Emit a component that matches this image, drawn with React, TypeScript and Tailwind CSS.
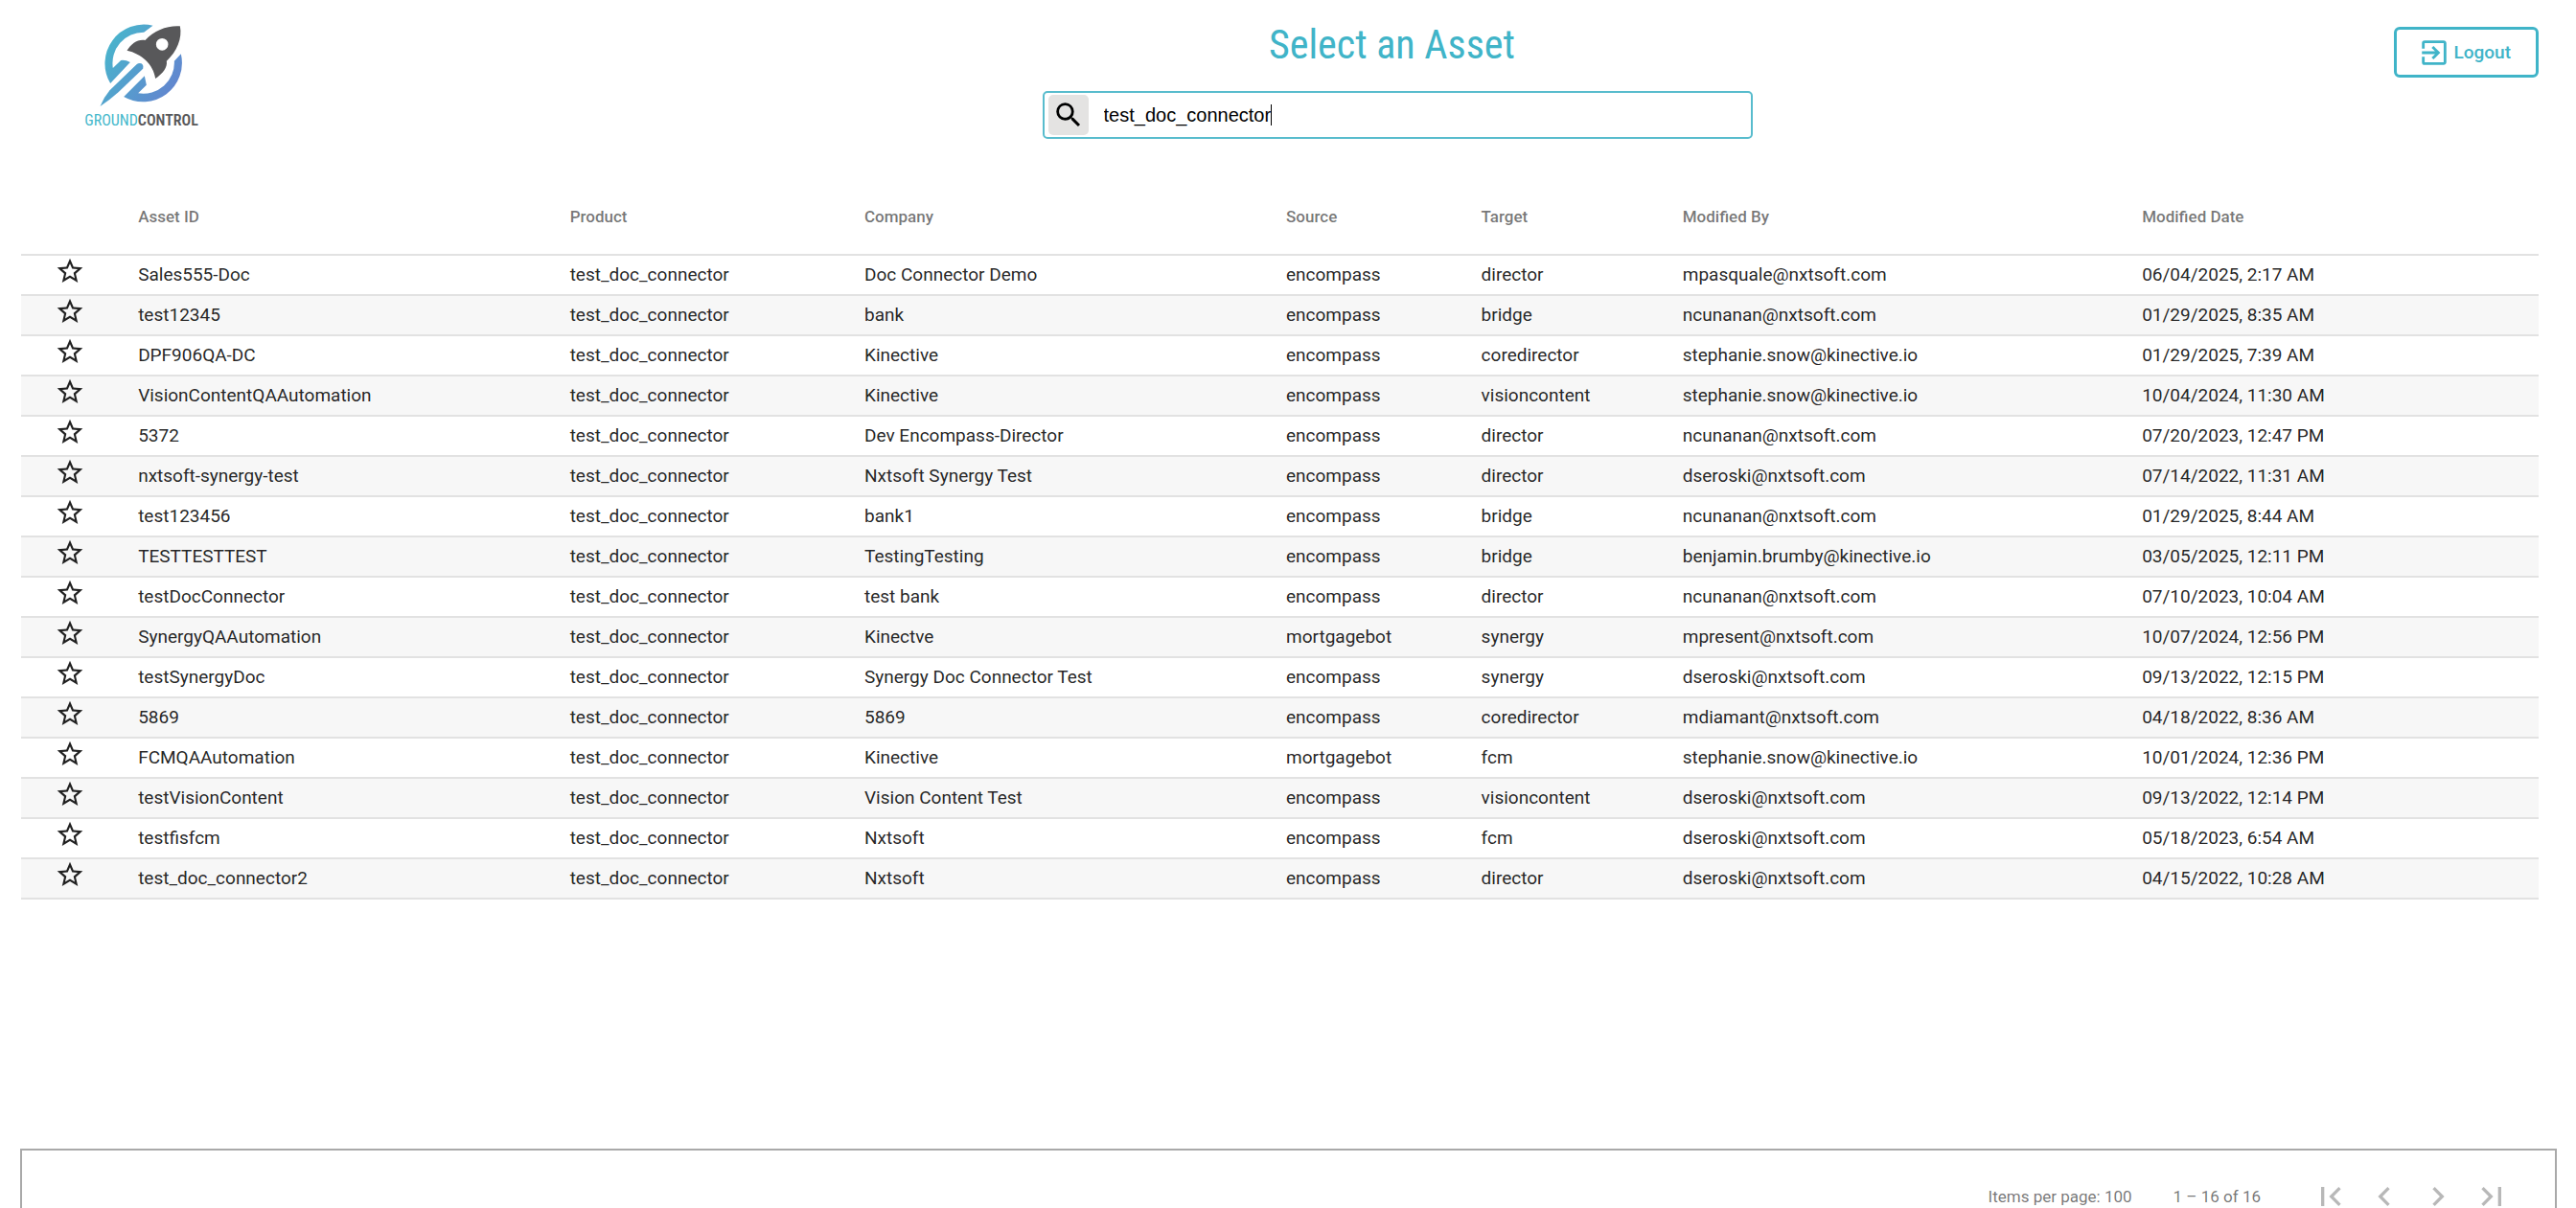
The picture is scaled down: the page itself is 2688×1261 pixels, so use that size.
import {
  MdChevronLeft,
  MdChevronRight,
  MdExitToApp,
  MdFirstPage,
  MdLastPage,
  MdSearch,
  MdStarBorder,
} from "react-icons/md";

const columns = [
  { label: "Asset ID", width: "w-[17.15%]" },
  { label: "Product", width: "w-[11.7%]" },
  { label: "Company", width: "w-[16.75%]" },
  { label: "Source", width: "w-[7.75%]" },
  { label: "Target", width: "w-[8%]" },
  { label: "Modified By", width: "w-[18.25%]" },
  { label: "Modified Date", width: "" },
];

const assets = [
  ["Sales555-Doc", "test_doc_connector", "Doc Connector Demo", "encompass", "director", "mpasquale@nxtsoft.com", "06/04/2025, 2:17 AM"],
  ["test12345", "test_doc_connector", "bank", "encompass", "bridge", "ncunanan@nxtsoft.com", "01/29/2025, 8:35 AM"],
  ["DPF906QA-DC", "test_doc_connector", "Kinective", "encompass", "coredirector", "stephanie.snow@kinective.io", "01/29/2025, 7:39 AM"],
  ["VisionContentQAAutomation", "test_doc_connector", "Kinective", "encompass", "visioncontent", "stephanie.snow@kinective.io", "10/04/2024, 11:30 AM"],
  ["5372", "test_doc_connector", "Dev Encompass-Director", "encompass", "director", "ncunanan@nxtsoft.com", "07/20/2023, 12:47 PM"],
  ["nxtsoft-synergy-test", "test_doc_connector", "Nxtsoft Synergy Test", "encompass", "director", "dseroski@nxtsoft.com", "07/14/2022, 11:31 AM"],
  ["test123456", "test_doc_connector", "bank1", "encompass", "bridge", "ncunanan@nxtsoft.com", "01/29/2025, 8:44 AM"],
  ["TESTTESTTEST", "test_doc_connector", "TestingTesting", "encompass", "bridge", "benjamin.brumby@kinective.io", "03/05/2025, 12:11 PM"],
  ["testDocConnector", "test_doc_connector", "test bank", "encompass", "director", "ncunanan@nxtsoft.com", "07/10/2023, 10:04 AM"],
  ["SynergyQAAutomation", "test_doc_connector", "Kinectve", "mortgagebot", "synergy", "mpresent@nxtsoft.com", "10/07/2024, 12:56 PM"],
  ["testSynergyDoc", "test_doc_connector", "Synergy Doc Connector Test", "encompass", "synergy", "dseroski@nxtsoft.com", "09/13/2022, 12:15 PM"],
  ["5869", "test_doc_connector", "5869", "encompass", "coredirector", "mdiamant@nxtsoft.com", "04/18/2022, 8:36 AM"],
  ["FCMQAAutomation", "test_doc_connector", "Kinective", "mortgagebot", "fcm", "stephanie.snow@kinective.io", "10/01/2024, 12:36 PM"],
  ["testVisionContent", "test_doc_connector", "Vision Content Test", "encompass", "visioncontent", "dseroski@nxtsoft.com", "09/13/2022, 12:14 PM"],
  ["testfisfcm", "test_doc_connector", "Nxtsoft", "encompass", "fcm", "dseroski@nxtsoft.com", "05/18/2023, 6:54 AM"],
  ["test_doc_connector2", "test_doc_connector", "Nxtsoft", "encompass", "director", "dseroski@nxtsoft.com", "04/15/2022, 10:28 AM"],
];

const pagerButtons = [
  { label: "First page", Icon: MdFirstPage },
  { label: "Previous page", Icon: MdChevronLeft },
  { label: "Next page", Icon: MdChevronRight },
  { label: "Last page", Icon: MdLastPage },
];

function Logo() {
  return (
    <div className="flex w-[115px] flex-col items-center">
      <svg viewBox="126 72 272 264" className="h-[88px] w-[91px]" aria-hidden="true">
        <defs>
          <linearGradient id="orbit" gradientUnits="userSpaceOnUse" x1="150" y1="130" x2="380" y2="280">
            <stop offset="0" stopColor="#49b5cc" />
            <stop offset="1" stopColor="#6384cf" />
          </linearGradient>
        </defs>
        <g fill="url(#orbit)">
          <path d="M298 80A122 122 0 0 0 165 261L227 195Q212 187 198 189L173 213A97 97 0 0 1 270 101Z" />
          <path d="M386 169A122 122 0 0 1 207 303L272 238L278 266L252 292A97 97 0 0 0 365 191Z" />
          <path d="M133 333Q145 304 163 283L247 202Q254 196 262 199Q270 204 267 215L190 289Q162 314 133 333Z" />
        </g>
        <path
          fill="#58585a"
          fillRule="evenodd"
          d="M383 82C345 79 304 94 274 126C250 122 231 137 217 158C262 168 300 201 306 246C327 231 345 212 341 191C373 163 391 119 383 82ZM327 120a19 19 0 1 1 0 38a19 19 0 0 1 0-38Z"
        />
      </svg>
      <span className="font-['Roboto_Condensed',sans-serif] text-[16px] leading-7">
        <span className="text-[#45b8cb]">GROUND</span>
        <span className="font-semibold text-[#58585a]">CONTROL</span>
      </span>
    </div>
  );
}

export default function App() {
  return (
    <div className="flex h-screen flex-col overflow-hidden bg-white font-[Roboto,sans-serif] text-[19px] text-black/87">
      <header className="grid h-[188px] shrink-0 grid-cols-[229px_1fr_27.6%_1fr] items-start">
        <div className="pt-6 pl-[90px]">
          <Logo />
        </div>
        <div />
        <div className="pt-4">
          <h1 className="pr-3 text-center font-['Roboto_Condensed',sans-serif] text-[42px] leading-[62px] text-[#40b4c8]">
            Select an Asset
          </h1>
          <form className="mt-[17px] flex h-[50px] items-center rounded-[5px] border-2 border-[#58bccd] px-1">
            <button
              type="submit"
              aria-label="Search"
              className="flex size-[42px] items-center justify-center rounded-[5px] bg-[#e4e3e2] text-black"
            >
              <MdSearch className="size-[34px]" />
            </button>
            <div className="relative flex-1">
              <input
                type="text"
                aria-label="Search assets"
                defaultValue="test_doc_connector"
                className="w-full px-4 font-['Liberation_Sans',sans-serif] text-[20px] text-black caret-transparent outline-none"
              />
              <span className="absolute inset-y-1 left-[190px] w-px bg-black" aria-hidden="true" />
            </div>
          </form>
        </div>
        <button
          type="button"
          className="mt-7 mr-[39px] flex h-[53px] items-center gap-1 justify-self-end rounded-[6px] border-3 border-[#40b4c8] pt-px pr-[26px] pl-[22px] font-medium text-[#40b4c8]"
        >
          <MdExitToApp className="size-[34px]" />
          Logout
        </button>
      </header>

      <main className="min-h-0 flex-1 pr-[39px] pl-[22px]">
        <table className="w-full table-fixed border-collapse text-left">
          <thead>
            <tr className="h-[78px] border-b-2 border-[#e2e2e2] text-[17px] text-black/55">
              <th className="w-[4.65%]" aria-label="Favorite" />
              {columns.map((column) => (
                <th key={column.label} className={`${column.width} font-medium`}>
                  {column.label}
                </th>
              ))}
            </tr>
          </thead>
          <tbody>
            {assets.map((asset) => (
              <tr key={asset[0]} className="h-[42px] border-b-2 border-[#e2e2e2] even:bg-[#f7f7f7]">
                <td className="pb-2 pl-[35px]">
                  <button type="button" aria-label={`Favorite ${asset[0]}`} className="block">
                    <MdStarBorder className="size-8" />
                  </button>
                </td>
                {asset.map((value, index) => (
                  <td key={columns[index].label} className="whitespace-nowrap">
                    {value}
                  </td>
                ))}
              </tr>
            ))}
          </tbody>
        </table>
      </main>

      <footer className="mr-5 ml-[21px] flex h-[62px] shrink-0 items-start justify-end border-2 border-b-0 border-[#a9a9a9] pt-5 pr-[38px] text-[17px] leading-[56px] text-black/55">
        <span className="mr-[43px]">Items per page: 100</span>
        <span className="mr-[45px]">1 – 16 of 16</span>
        <nav aria-label="Pagination" className="flex">
          {pagerButtons.map(({ label, Icon }) => (
            <button
              key={label}
              type="button"
              aria-label={label}
              disabled
              className="flex size-14 items-center justify-center text-black/28"
            >
              <Icon className="size-10" />
            </button>
          ))}
        </nav>
      </footer>
    </div>
  );
}
